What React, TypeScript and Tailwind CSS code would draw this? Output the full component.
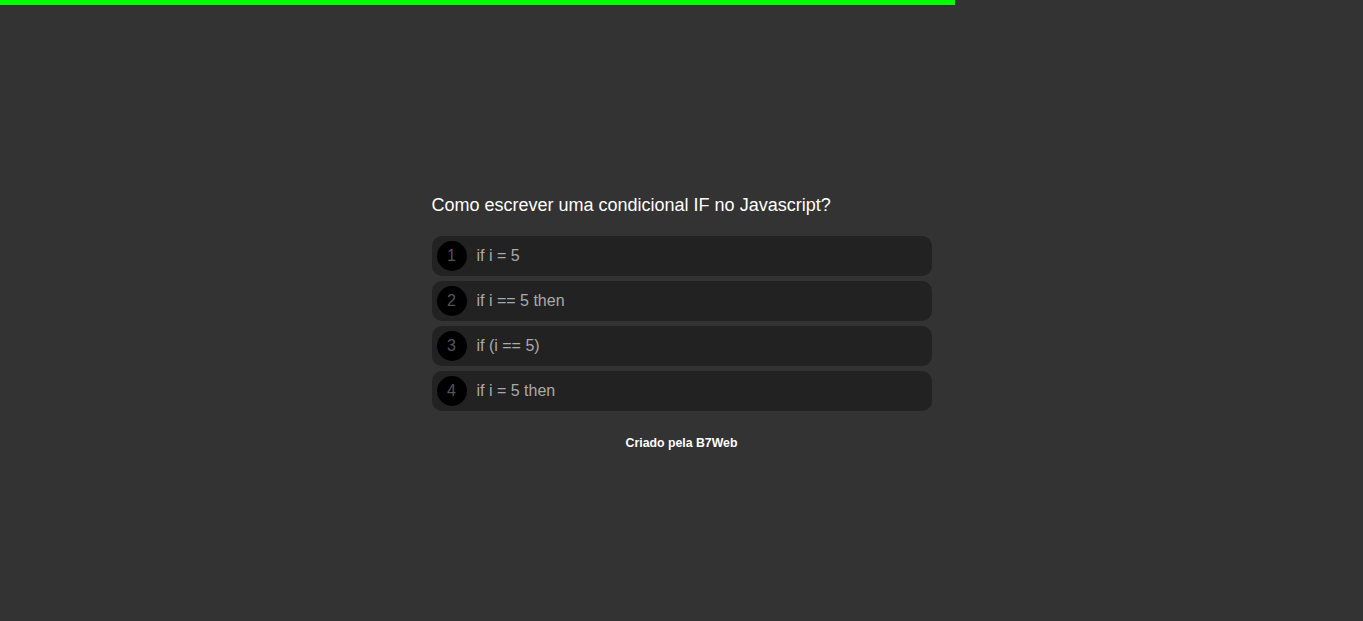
import React from "react";

const options = ["if i = 5", "if i == 5 then", "if (i == 5)", "if i = 5 then"];

export default function App() {
  return (
    <div className="min-h-[621px] w-full bg-[#333333] font-['Liberation_Sans',Arial,sans-serif]">
      <div className="h-[5px] w-[955px] bg-[#00ff00]" />
      <div className="mx-auto w-[500px] pt-[190px]">
        <div className="text-[18px] leading-[21px] text-white">Como escrever uma condicional IF no Javascript?</div>
        <div className="mt-[20px] flex flex-col gap-[5px]">
          {options.map((o, i) => (
            <div key={i} className="flex h-[40px] items-center rounded-[10px] bg-[#222222] px-[5px]">
              <div className="flex h-[30px] w-[30px] items-center justify-center rounded-full bg-black text-[16px] text-[#555555]">
                {i + 1}
              </div>
              <div className="ml-[10px] text-[16px] text-[#aaaaaa]">{o}</div>
            </div>
          ))}
        </div>
        <div className="mt-[25px] text-center text-[12.3px] leading-[14px] font-bold text-white">Criado pela B7Web</div>
      </div>
    </div>
  );
}
